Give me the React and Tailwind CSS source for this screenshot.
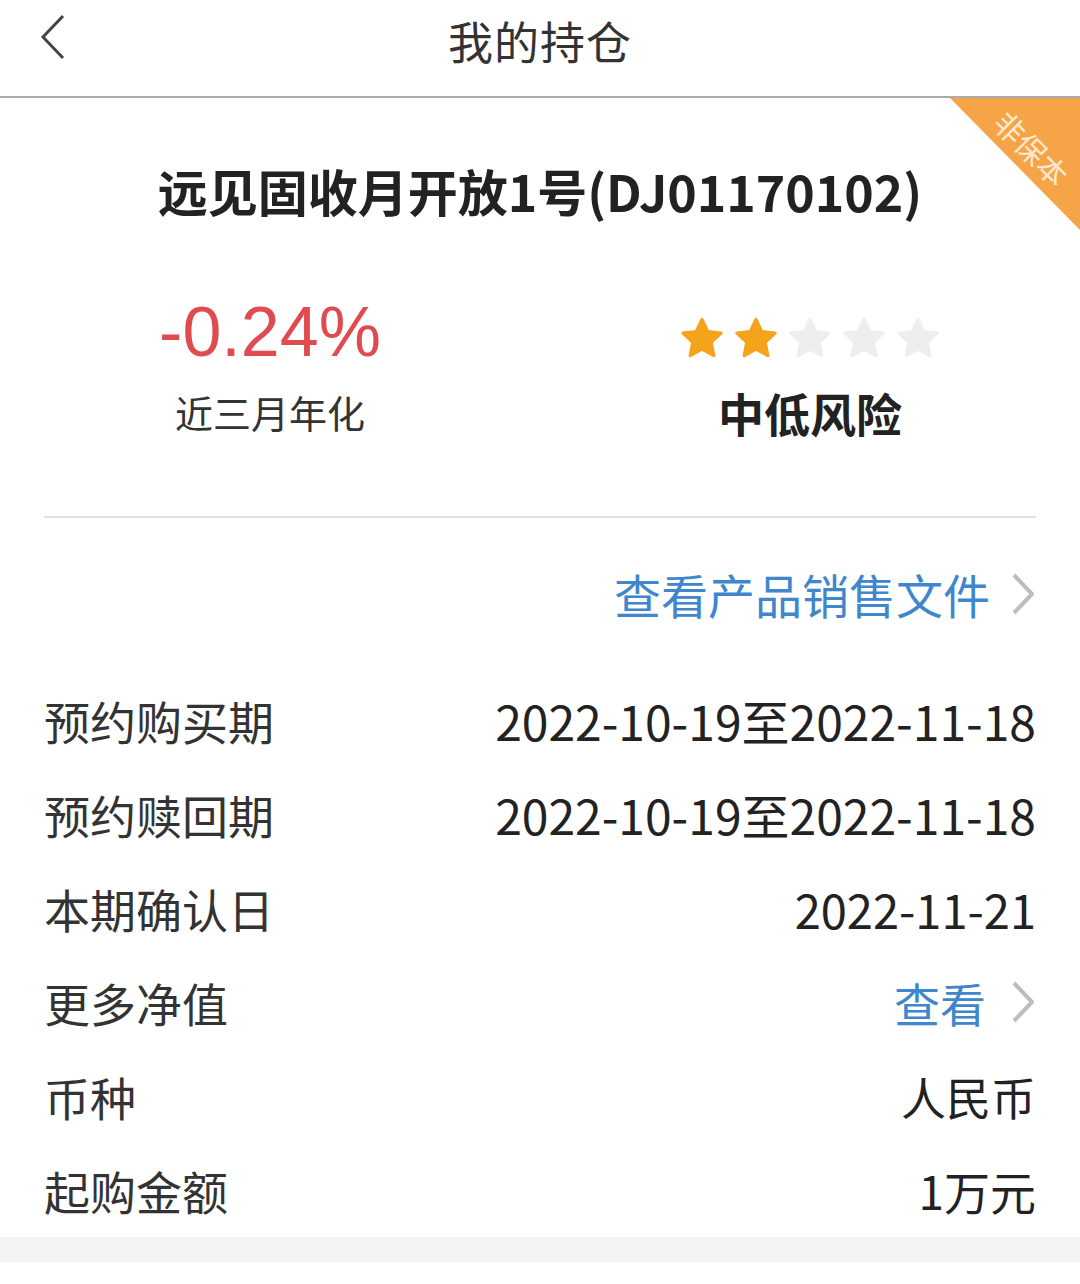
import React from "react";

const CJK = { fontFamily: '"Noto Sans CJK SC", "Noto Sans", sans-serif' };
const NUM = { fontFamily: '"Liberation Sans", Arial, sans-serif' };

function Star({ on }) {
  return (
    <svg width="48" height="48" viewBox="0 0 24 24">
      <path
        d="M12 2.2l2.9 6.1 6.6.8-4.9 4.6 1.3 6.6L12 17l-5.9 3.3 1.3-6.6-4.9-4.6 6.6-.8z"
        fill={on ? "#f6a31c" : "#eeeeee"}
        stroke={on ? "#f6a31c" : "#eeeeee"}
        strokeWidth="1.6"
        strokeLinejoin="round"
      />
    </svg>
  );
}

function Chevron() {
  return (
    <svg width="26" height="44" viewBox="0 0 26 44" className="shrink-0">
      <path d="M4 3l18 19L4 41" fill="none" stroke="#bdbdbd" strokeWidth="4" strokeLinejoin="round" />
    </svg>
  );
}

function Row({ label, children }) {
  return (
    <div className="h-[94px] flex items-center justify-between px-[44px]">
      <span className="text-[46px] leading-none text-[#333]">{label}</span>
      {children}
    </div>
  );
}

export default function App() {
  return (
    <div className="w-full min-h-[1284px] bg-white" style={CJK}>
      <header className="relative h-[98px] flex items-center justify-center border-b-2 border-[#ababab]">
        <svg width="30" height="48" viewBox="0 0 30 48" className="absolute left-[38px] top-[13px]">
          <path d="M25 3L5 24l20 21" fill="none" stroke="#444" strokeWidth="3" />
        </svg>
        <span className="text-[45px] leading-none text-[#333] tracking-[1px] -mt-[16px]">我的持仓</span>
      </header>

      <main className="relative overflow-hidden">
        <div className="absolute right-0 top-0 w-[130px] h-[132px] bg-[#f5a547] [clip-path:polygon(0_0,100%_0,100%_100%)]">
          <div className="absolute left-[82px] top-[50px] -translate-x-1/2 -translate-y-1/2 rotate-45 text-[30px] leading-none text-[#fde9cf] whitespace-nowrap">
            非保本
          </div>
        </div>

        <div className="h-[184px] flex items-center justify-center">
          <h1 className="text-[50px] leading-none font-bold text-[#222]">远见固收月开放1号(DJ01170102)</h1>
        </div>

        <div className="grid grid-cols-2">
          <div className="flex flex-col items-center">
            <div className="h-[100px] flex items-center">
              <span className="text-[70px] leading-none text-[#e04b50]" style={NUM}>-0.24%</span>
            </div>
            <div className="h-[60px] flex items-center">
              <span className="text-[38px] leading-none text-[#333]">近三月年化</span>
            </div>
          </div>
          <div className="flex flex-col items-center">
            <div className="h-[100px] flex items-center gap-[6px] pt-[14px]">
              <Star on />
              <Star on />
              <Star />
              <Star />
              <Star />
            </div>
            <div className="h-[60px] flex items-center">
              <span className="text-[46px] leading-none font-bold text-[#222]">中低风险</span>
            </div>
          </div>
        </div>

        <div className="mt-[74px] mx-[44px] h-[2px] bg-[#e2e2e2]" />

        <div className="h-[155px] flex items-center justify-end px-[44px] gap-[20px] pb-[4px]">
          <span className="text-[47px] leading-none text-[#3f86cc]">查看产品销售文件</span>
          <Chevron />
        </div>

        <Row label="预约购买期">
          <span className="text-[48px] leading-none text-[#222]">2022-10-19至2022-11-18</span>
        </Row>
        <Row label="预约赎回期">
          <span className="text-[48px] leading-none text-[#222]">2022-10-19至2022-11-18</span>
        </Row>
        <Row label="本期确认日">
          <span className="text-[47px] leading-none text-[#222]">2022-11-21</span>
        </Row>
        <Row label="更多净值">
          <div className="flex items-center gap-[24px]">
            <span className="text-[46px] leading-none text-[#3f86cc]">查看</span>
            <Chevron />
          </div>
        </Row>
        <Row label="币种">
          <span className="text-[45px] leading-none text-[#222]">人民币</span>
        </Row>
        <Row label="起购金额">
          <span className="text-[46px] leading-none text-[#222]">1万元</span>
        </Row>

        <div className="h-[25px] bg-[#f4f4f4]" />
      </main>
    </div>
  );
}
